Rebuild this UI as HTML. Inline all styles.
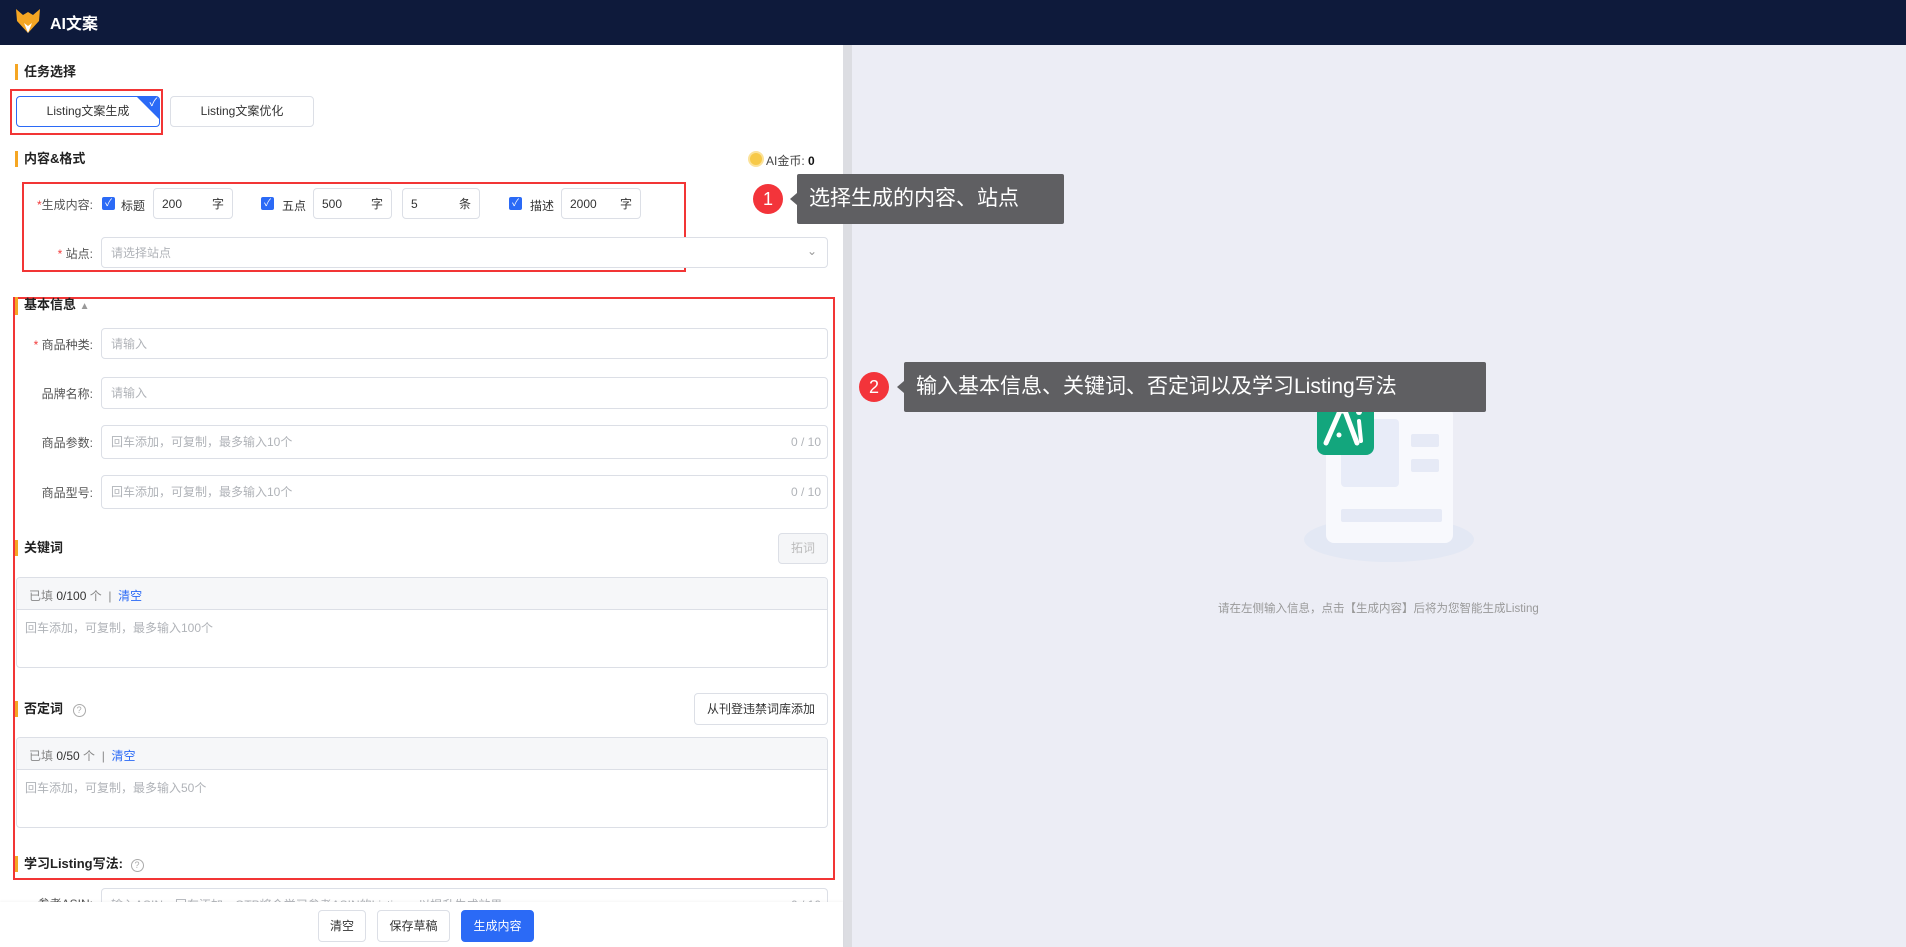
<!DOCTYPE html>
<html><head><meta charset="utf-8"><style>
*{box-sizing:border-box;margin:0;padding:0}
body{width:1906px;height:947px;overflow:hidden;position:relative;background:#ecedf5;font-family:"Liberation Sans","Noto Sans CJK SC",sans-serif;color:#333;font-size:12px}
.a{position:absolute}
.hdr{left:0;top:0;width:1906px;height:45px;background:#0e1a3b}
.left{left:0;top:45px;width:843px;height:902px;background:#fff}
.sb{left:843px;top:45px;width:9px;height:902px;background:#dcdde2}
.t{font-size:13px;font-weight:bold;color:#222;border-left:3px solid #f5a623;padding-left:6px;line-height:16px}
.inp{border:1px solid #dcdfe6;border-radius:4px;background:#fff}
.inp span{line-height:14px}
.ph{color:#b0b3b8;font-size:12px}
.lbl{font-size:12px;color:#555;text-align:right}
.req{color:#f23c3c}
.cb{width:13px;height:13px;background:#2b6af6;border-radius:2px;color:#fff;font-size:10px;line-height:13px;text-align:center}
.red{border:2px solid #f23535}
.btn{border:1px solid #dcdfe6;border-radius:4px;background:#fff;font-size:12px;text-align:center;color:#333}
.tip{background:#5f5f62;color:#fff;font-size:21px;border-radius:2px;padding-left:12px}
.badge{width:30px;height:30px;border-radius:50%;background:#f3343a;color:#fff;font-size:18px;text-align:center;line-height:30px}
</style></head><body>
<div class="a hdr"></div>
<svg class="a" style="left:15px;top:8px" width="26" height="26" viewBox="0 0 26 26"><path d="M1 1 L8 7 L13 4 L18 7 L25 1 L24 13 L13 25 L2 13Z" fill="#f5a623"/><path d="M13 25 L9 15 L13 18 L17 15Z" fill="#fff"/></svg>
<div class="a" style="left:50px;top:10px;color:#fff;font-weight:bold;font-size:16px">AI文案</div>
<div class="a left"></div>
<div class="a sb"></div>

<div class="a t" style="left:15px;top:64px">任务选择</div>
<div class="a red" style="left:10px;top:89px;width:153px;height:46px"></div>
<div class="a btn" style="left:16px;top:96px;width:144px;height:31px;border-color:#2b6af6;line-height:29px;overflow:hidden">Listing文案生成<div class="a" style="right:-1px;top:-1px;width:0;height:0;border-top:24px solid #2b6af6;border-left:24px solid transparent"></div><div class="a" style="right:2px;top:-8px;color:#fff;font-size:11px">✓</div></div>
<div class="a btn" style="left:170px;top:96px;width:144px;height:31px;line-height:29px">Listing文案优化</div>

<div class="a t" style="left:15px;top:151px">内容&amp;格式</div>
<div class="a" style="left:748px;top:151px;width:16px;height:16px;border-radius:50%;background:#f7c948;border:2px solid #fbe29a"></div>
<div class="a" style="left:766px;top:152px;font-size:12px;color:#444">AI金币: <b style="color:#111">0</b></div>

<div class="a red" style="left:22px;top:182px;width:664px;height:90px"></div>
<div class="a lbl" style="left:25px;top:196px;width:68px"><span class="req">*</span>生成内容:</div>
<div class="a cb" style="left:102px;top:197px">✓</div><div class="a" style="left:121px;top:197px">标题</div>
<div class="a inp" style="left:153px;top:188px;width:80px;height:31px"><span class="a" style="left:8px;top:8px">200</span><span class="a" style="right:8px;top:8px">字</span></div>
<div class="a cb" style="left:261px;top:197px">✓</div><div class="a" style="left:282px;top:197px">五点</div>
<div class="a inp" style="left:313px;top:188px;width:79px;height:31px"><span class="a" style="left:8px;top:8px">500</span><span class="a" style="right:8px;top:8px">字</span></div>
<div class="a inp" style="left:402px;top:188px;width:78px;height:31px"><span class="a" style="left:8px;top:8px">5</span><span class="a" style="right:8px;top:8px">条</span></div>
<div class="a cb" style="left:509px;top:197px">✓</div><div class="a" style="left:530px;top:197px">描述</div>
<div class="a inp" style="left:561px;top:188px;width:80px;height:31px"><span class="a" style="left:8px;top:8px">2000</span><span class="a" style="right:8px;top:8px">字</span></div>
<div class="a lbl" style="left:25px;top:245px;width:68px"><span class="req">*</span> 站点:</div>
<div class="a inp" style="left:101px;top:237px;width:727px;height:31px"><span class="a ph" style="left:9px;top:8px">请选择站点</span><span class="a" style="right:10px;top:6px;color:#999">⌄</span></div>

<div class="a red" style="left:13px;top:297px;width:822px;height:583px"></div>
<div class="a t" style="left:15px;top:297px">基本信息 <span style="color:#999;font-size:10px">▲</span></div>
<div class="a lbl" style="left:25px;top:336px;width:68px"><span class="req">*</span> 商品种类:</div>
<div class="a inp" style="left:101px;top:328px;width:727px;height:31px"><span class="a ph" style="left:9px;top:8px">请输入</span></div>
<div class="a lbl" style="left:25px;top:385px;width:68px">品牌名称:</div>
<div class="a inp" style="left:101px;top:377px;width:727px;height:32px"><span class="a ph" style="left:9px;top:8px">请输入</span></div>
<div class="a lbl" style="left:25px;top:434px;width:68px">商品参数:</div>
<div class="a inp" style="left:101px;top:425px;width:727px;height:34px"><span class="a ph" style="left:9px;top:9px">回车添加，可复制，最多输入10个</span><span class="a ph" style="right:6px;top:9px">0 / 10</span></div>
<div class="a lbl" style="left:25px;top:484px;width:68px">商品型号:</div>
<div class="a inp" style="left:101px;top:475px;width:727px;height:34px"><span class="a ph" style="left:9px;top:9px">回车添加，可复制，最多输入10个</span><span class="a ph" style="right:6px;top:9px">0 / 10</span></div>

<div class="a t" style="left:15px;top:540px">关键词</div>
<div class="a btn" style="left:778px;top:533px;width:50px;height:31px;line-height:29px;background:#f5f6f8;color:#bbb">拓词</div>
<div class="a inp" style="left:16px;top:577px;width:812px;height:91px;overflow:hidden"><div style="height:32px;background:#f6f7f9;border-bottom:1px solid #dcdfe6;padding:9px 12px;color:#888">已填 <span style="color:#333">0/100</span> 个 &nbsp;| &nbsp;<span style="color:#2b6af6">清空</span></div><div class="ph" style="padding:9px 8px">回车添加，可复制，最多输入100个</div></div>

<div class="a t" style="left:15px;top:701px">否定词 <span style="display:inline-block;width:13px;height:13px;border:1px solid #aaa;border-radius:50%;font-size:9px;color:#aaa;text-align:center;line-height:11px;font-weight:normal;margin-left:6px">?</span></div>
<div class="a btn" style="left:694px;top:693px;width:134px;height:32px;line-height:30px">从刊登违禁词库添加</div>
<div class="a inp" style="left:16px;top:737px;width:812px;height:91px;overflow:hidden"><div style="height:32px;background:#f6f7f9;border-bottom:1px solid #dcdfe6;padding:9px 12px;color:#888">已填 <span style="color:#333">0/50</span> 个 &nbsp;| &nbsp;<span style="color:#2b6af6">清空</span></div><div class="ph" style="padding:9px 8px">回车添加，可复制，最多输入50个</div></div>

<div class="a t" style="left:15px;top:856px">学习Listing写法: <span style="display:inline-block;width:13px;height:13px;border:1px solid #aaa;border-radius:50%;font-size:9px;color:#aaa;text-align:center;line-height:11px;font-weight:normal;margin-left:4px">?</span></div>
<div class="a lbl" style="left:25px;top:895px;width:68px">参考ASIN:</div>
<div class="a inp" style="left:101px;top:888px;width:727px;height:34px"><span class="a ph" style="left:9px;top:9px">输入ASIN，回车添加，GTP将会学习参考ASIN的Listing，以提升生成效果</span><span class="a ph" style="right:6px;top:9px">0 / 10</span></div>
<div class="a" style="left:0;top:902px;width:843px;height:45px;background:#fff;box-shadow:0 -1px 2px rgba(0,0,0,.04)"></div>
<div class="a btn" style="left:318px;top:910px;width:48px;height:32px;line-height:30px">清空</div>
<div class="a btn" style="left:377px;top:910px;width:73px;height:32px;line-height:30px">保存草稿</div>
<div class="a btn" style="left:461px;top:910px;width:73px;height:32px;line-height:30px;background:#2b6af6;border-color:#2b6af6;color:#fff">生成内容</div>

<div class="a" style="left:1304px;top:517px;width:170px;height:45px;border-radius:50%;background:#e3e8f4"></div>
<div class="a" style="left:1326px;top:407px;width:127px;height:136px;border-radius:8px;background:#f8f9fd"></div>
<div class="a" style="left:1341px;top:419px;width:58px;height:68px;border-radius:4px;background:#e8ecf8"></div>
<div class="a" style="left:1411px;top:434px;width:28px;height:13px;border-radius:2px;background:#e6eaf6"></div>
<div class="a" style="left:1411px;top:459px;width:28px;height:13px;border-radius:2px;background:#e6eaf6"></div>
<div class="a" style="left:1341px;top:509px;width:101px;height:13px;border-radius:2px;background:#e6eaf6"></div>
<svg class="a" style="left:1317px;top:397px" width="57" height="58" viewBox="0 0 57 58"><rect width="57" height="58" rx="8" fill="#13a67d"/><path d="M9 46 L23 14 L28 14 L40 46" stroke="#fff" stroke-width="5" fill="none" stroke-linecap="round"/><circle cx="22" cy="38" r="2.5" fill="#fff"/><path d="M42 24 L44 44" stroke="#fff" stroke-width="4" stroke-linecap="round"/><circle cx="42" cy="15" r="3" fill="#fff"/></svg>
<div class="a" style="left:1218px;top:600px;font-size:11.5px;color:#999">请在左侧输入信息，点击【生成内容】后将为您智能生成Listing</div>

<div class="a badge" style="left:753px;top:184px">1</div>
<div class="a tip" style="left:797px;top:174px;width:267px;height:50px;line-height:50px">选择生成的内容、站点</div>
<div class="a" style="left:790px;top:193px;border-right:7px solid #5f5f62;border-top:6px solid transparent;border-bottom:6px solid transparent"></div>
<div class="a badge" style="left:859px;top:372px">2</div>
<div class="a tip" style="left:904px;top:362px;width:582px;height:50px;line-height:50px">输入基本信息、关键词、否定词以及学习Listing写法</div>
<div class="a" style="left:897px;top:381px;border-right:7px solid #5f5f62;border-top:6px solid transparent;border-bottom:6px solid transparent"></div>
</body></html>
